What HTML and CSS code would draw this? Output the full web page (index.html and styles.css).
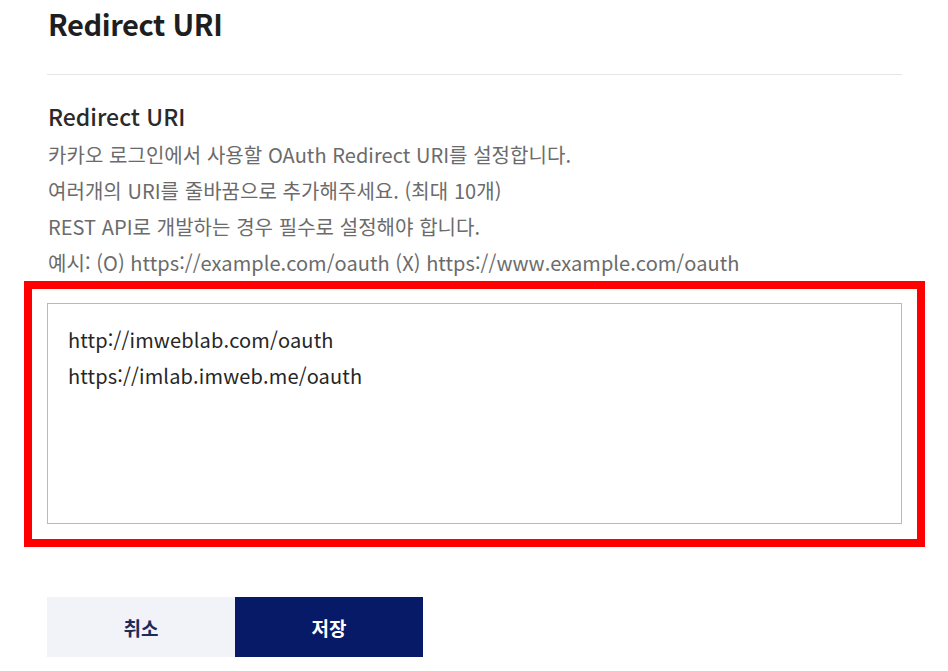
FILE: index.html
```html
<!DOCTYPE html>
<html lang="ko">
<head>
<meta charset="utf-8">
<title>Redirect URI</title>
<link rel="stylesheet" href="styles.css">
</head>
<body>
<main class="page">
  <header class="page-head">
    <h1 class="page-title">Redirect URI</h1>
  </header>
  <section class="field">
    <h2 class="field-title">Redirect URI</h2>
    <p class="field-help">카카오 로그인에서 사용할 OAuth Redirect URI를 설정합니다.<br>여러개의 URI를 줄바꿈으로 추가해주세요. (최대 10개)<br>REST API로 개발하는 경우 필수로 설정해야 합니다.<br>예시: (O) https://example.com/oauth (X) https://www.example.com/oauth</p>
    <div class="highlight">
      <textarea class="uri-input" spellcheck="false">http://imweblab.com/oauth
https://imlab.imweb.me/oauth</textarea>
    </div>
  </section>
  <div class="actions">
    <button class="btn btn-cancel" type="button">취소</button>
    <button class="btn btn-save" type="button">저장</button>
  </div>
</main>
</body>
</html>
```
FILE: styles.css
```css
html, body {
  margin: 0;
  padding: 0;
  background: #ffffff;
}
body {
  font-family: "Noto Sans CJK KR", "Noto Sans", sans-serif;
  color: #222222;
}
.page {
  width: 855px;
  padding-left: 47px;
}
.page-head {
  padding: 3px 0 31px 1px;
  border-bottom: 1px solid #e6e6e6;
}
.page-title {
  margin: 0;
  font-size: 29px;
  line-height: 40px;
  font-weight: 700;
  color: #1e1e1e;
  letter-spacing: -0.4px;
}
.field {
  padding-top: 25px;
}
.field-title {
  margin: 0 0 0 1px;
  font-size: 23px;
  line-height: 32px;
  font-weight: 500;
  color: #2a2a2a;
}
.field-help {
  margin: 5px 0 0 1px;
  font-size: 20px;
  line-height: 36px;
  color: #6b6b6b;
  letter-spacing: 0.05px;
}
.highlight {
  margin: 0 -23px;
  border: 8px solid #ff0000;
  padding: 14px 15px 15px 15px;
}
.uri-input {
  display: block;
  box-sizing: border-box;
  width: 100%;
  height: 221px;
  margin: 0;
  padding: 18px 20px;
  border: 1px solid #b9b9b9;
  border-radius: 0;
  resize: none;
  outline: none;
  font-family: inherit;
  font-size: 20px;
  line-height: 36px;
  color: #262626;
  letter-spacing: 0.15px;
  background: #ffffff;
  overflow: hidden;
}
.actions {
  display: flex;
  margin-top: 50px;
}
.btn {
  width: 188px;
  height: 60px;
  border: 0;
  border-radius: 0;
  font-family: inherit;
  font-size: 19px;
  font-weight: 700;
  cursor: pointer;
}
.btn-cancel {
  background: #f1f3f9;
  color: #1d2a5c;
}
.btn-save {
  background: #071a67;
  color: #ffffff;
}
```
